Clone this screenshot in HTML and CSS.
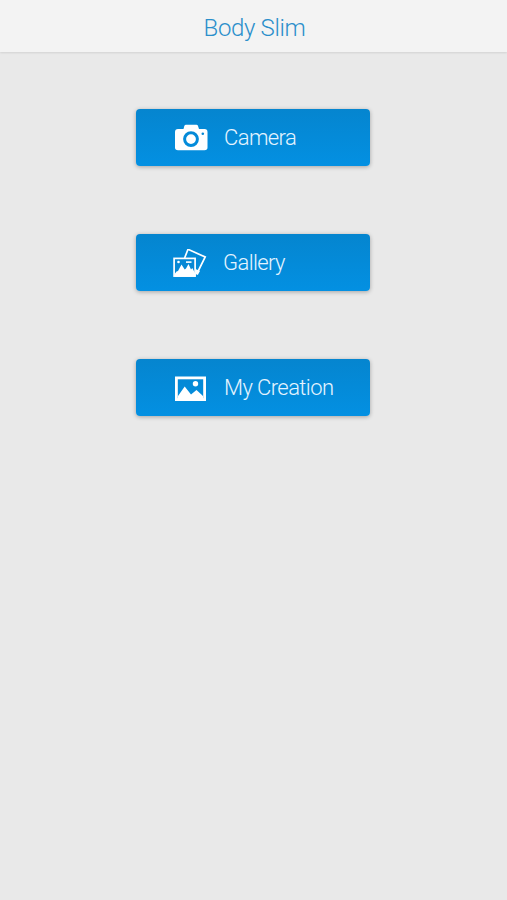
FILE: index.html
```html
<!DOCTYPE html>
<html>
<head>
<meta charset="UTF-8" />
<meta name="viewport" content="width=device-width, initial-scale=1" />
<title>Body Slim</title>
<link rel="stylesheet" href="styles.css">
</head>
<body>
<div class="header">
  <h1>Body Slim</h1>
</div>

<div class="menu">
  <button type="button" class="btn">
    <svg class="icon" viewBox="0 0 36 30">
      <path fill="#fff" fill-rule="evenodd" d="M5 5H10.500L11.300 2Q11.800 0.700 13 0.700H23.500Q24.700 0.700 25 2L26 5H31.500Q34.500 5 34.500 8V23.500Q34.500 26.300 31.500 26.300H5Q2 26.300 2 23.500V8Q2 5 5 5ZM18 7.200A7.900 7.900 0 1 0 18 23A7.900 7.900 0 1 0 18 7.200ZM18 10.200A4.900 4.900 0 1 1 18 20A4.900 4.900 0 1 1 18 10.200Z"/>
      <circle cx="29.800" cy="9.800" r="1.300" fill="#0587d3"/>
    </svg>
    <span>Camera</span>
  </button>

  <button type="button" class="btn gallery">
    <svg class="icon" viewBox="0 0 36 30">
      <path fill="none" stroke="#fff" stroke-width="1.700" d="M11.600 9L15 0.300L32.200 8L24.500 23.500L22.500 22.300"/>
      <path fill="#fff" d="M22.500 20L27 22L24.800 26L22.500 25Z"/>
      <rect x="1.100" y="9.400" width="21" height="17.700" fill="#0688d5" stroke="#fff" stroke-width="1.700"/>
      <path fill="#fff" d="M2 24.500L3.500 22.500L5 22L8.500 15.500L11.700 20.500L13 19.500L15.500 15L18 20.500L19.300 19L22 24V27.500H2Z"/>
      <circle cx="5.500" cy="13" r="1.300" fill="#fff"/>
      <path stroke="#fff" stroke-width="1.600" d="M13 13.100H18.500"/>
    </svg>
    <span>Gallery</span>
  </button>

  <button type="button" class="btn">
    <svg class="icon" viewBox="0 0 36 30">
      <rect x="3.400" y="3.900" width="28.200" height="21.700" fill="none" stroke="#fff" stroke-width="2.800"/>
      <path fill="#fff" d="M5 22L11.700 12.500L18 20.500L23.500 16L30 22V25.500H5Z"/>
      <circle cx="22.500" cy="9.700" r="2.700" fill="#fff"/>
    </svg>
    <span>My Creation</span>
  </button>
</div>
</body>
</html>
```
FILE: styles.css
```css
* {
  box-sizing: border-box;
}

body {
  margin: 0;
  min-height: 100vh;
  background: #e9e9e9;
  font-family: Roboto, sans-serif;
}

.header {
  height: 52px;
  padding-top: 4px;
  display: flex;
  align-items: center;
  justify-content: center;
  background: #f3f3f3;
  box-shadow: 0 1px 2px rgba(0, 0, 0, 0.1);
}

.header h1 {
  margin: 0;
  padding-left: 2px;
  color: #2b8fcb;
  font-size: 24px;
  font-weight: 300;
  letter-spacing: -0.35px;
}

.menu {
  padding: 57px 1px 0 0;
  display: flex;
  flex-direction: column;
  align-items: center;
  gap: 68.2px;
}

.btn {
  width: 234px;
  height: 57px;
  padding: 2px 0 0 37px;
  display: flex;
  align-items: center;
  border: none;
  border-radius: 4px;
  background: linear-gradient(#0585cf, #0390e2);
  box-shadow: 0 1px 4px rgba(0, 0, 0, 0.3);
  color: #e4f4ff;
  font-family: inherit;
  font-size: 22px;
  font-weight: 300;
  letter-spacing: -0.6px;
}

.btn span {
  padding-bottom: 2px;
}

.btn .icon {
  width: 36px;
  height: 30px;
  margin-right: 15px;
}

.btn.gallery .icon {
  margin-right: 14px;
}
```
